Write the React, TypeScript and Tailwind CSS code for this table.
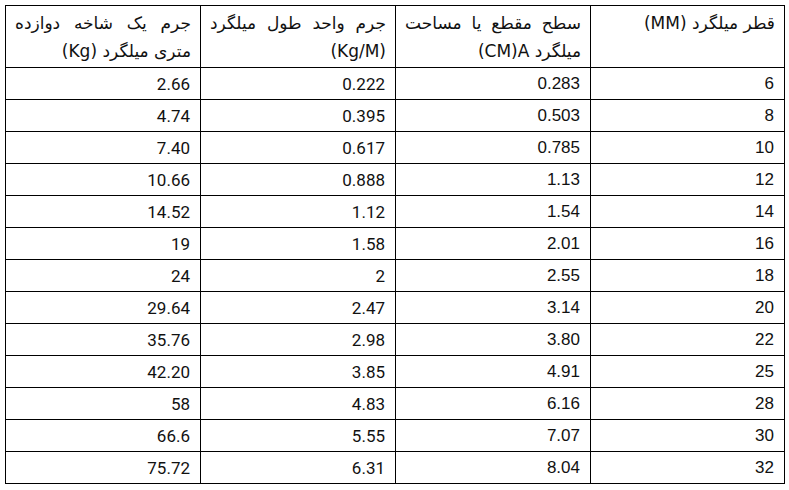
import type { ReactNode } from "react";

const rows: [string, string, string, string][] = [
  ["6", "0.283", "0.222", "2.66"],
  ["8", "0.503", "0.395", "4.74"],
  ["10", "0.785", "0.617", "7.40"],
  ["12", "1.13", "0.888", "10.66"],
  ["14", "1.54", "1.12", "14.52"],
  ["16", "2.01", "1.58", "19"],
  ["18", "2.55", "2", "24"],
  ["20", "3.14", "2.47", "29.64"],
  ["22", "3.80", "2.98", "35.76"],
  ["25", "4.91", "3.85", "42.20"],
  ["28", "6.16", "4.83", "58"],
  ["30", "7.07", "5.55", "66.6"],
  ["32", "8.04", "6.31", "75.72"],
];

const headers: ReactNode[] = [
  <>قطر میلگرد (MM)</>,
  <>
    سطح مقطع یا مساحت میلگرد{" "}
    <span dir="ltr" className="inline-block">
      (CM)A
    </span>
  </>,
  <>جرم واحد طول میلگرد (Kg/M)</>,
  <>جرم یک شاخه دوازده متری میلگرد (Kg)</>,
];

const arial = "font-['Liberation_Sans',Arial,sans-serif]";
const roboto = "font-['Roboto',sans-serif]";

export default function App() {
  return (
    <div className="bg-white w-[789px] h-[490px] p-[5px]">
      <table dir="rtl" className="w-[779px] border-collapse table-fixed text-[#111] text-[17px]">
        <colgroup>
          <col className="w-[194px]" />
          <col className="w-[195px]" />
          <col className="w-[195px]" />
          <col className="w-[195px]" />
        </colgroup>
        <thead>
          <tr className="h-[62px]">
            {headers.map((h, i) => (
              <th
                key={i}
                className="border border-black align-top text-justify font-normal px-[9px] pt-[3px] leading-[28px] font-['DejaVu_Sans',sans-serif] text-[17px]"
              >
                {h}
              </th>
            ))}
          </tr>
        </thead>
        <tbody>
          {rows.map((r) => (
            <tr key={r[0]} className="h-[32px]">
              {r.map((c, i) => (
                <td
                  key={i}
                  className={`border border-black text-right px-[10px] leading-[20px] ${i < 2 ? arial : roboto}`}
                >
                  {c}
                </td>
              ))}
            </tr>
          ))}
        </tbody>
      </table>
    </div>
  );
}
